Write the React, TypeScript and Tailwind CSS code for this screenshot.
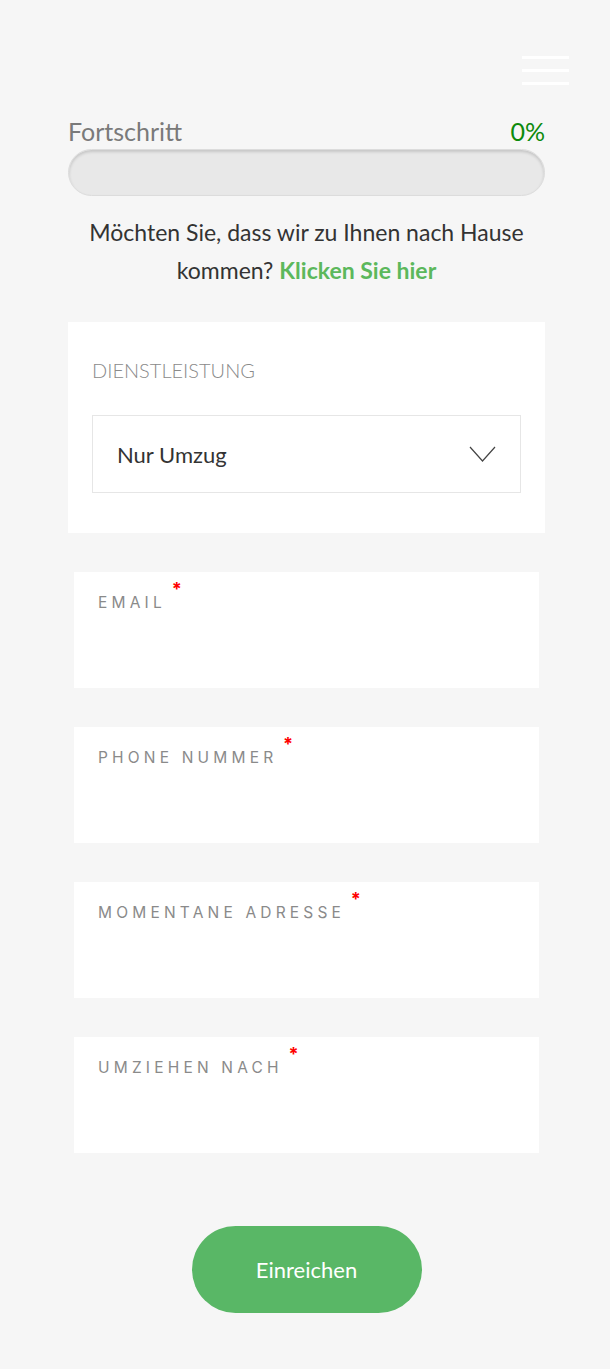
import React from "react";

const fields = ["Email", "Phone Nummer", "Momentane Adresse", "Umziehen nach"];

function Field({ label }: { label: string }) {
  return (
    <div className="mx-[6px] h-[116px] bg-white px-6 pt-[18px]">
      <label className="relative inline-block font-['Inter',sans-serif] text-[15.5px] uppercase tracking-[0.27em] text-[#8a8a8a]">
        {label}
        <span className="absolute -top-[16px] -right-[20px] text-[18px] font-bold text-[#ff0000]">*</span>
      </label>
    </div>
  );
}

export default function App() {
  return (
    <div className="min-h-[1369px] bg-[#f6f6f6] font-['Lato',sans-serif]">
      <div className="flex justify-end pt-[56px] pr-[41px]">
        <div className="flex w-[47px] flex-col gap-[10px]">
          <span className="h-[3px] bg-white" />
          <span className="h-[3px] bg-white" />
          <span className="h-[3px] bg-white" />
        </div>
      </div>

      <div className="ml-[68px] mr-[65px] mt-[31px]">
        <div className="flex items-end justify-between text-[25px] leading-[31px]">
          <span className="text-[#7a7a7a]">Fortschritt</span>
          <span className="text-[#0c8a0c]">0%</span>
        </div>
        <div className="mt-[2px] h-[47px] rounded-full border border-[#dcdcdc] bg-[#e8e8e8] shadow-[inset_0_2px_3px_rgba(0,0,0,0.15)]" />

        <p className="mt-[17px] text-center font-['Lato',sans-serif] text-[23px] leading-[38px] text-[#333]">
          Möchten Sie, dass wir zu Ihnen nach Hause kommen?{" "}
          <a className="font-bold text-[#5cb85c]">Klicken Sie hier</a>
        </p>

        <div className="mt-[33px] bg-white px-6 pt-[35px] pb-[40px]">
          <div className="text-[20px] font-light uppercase leading-[26px] text-[#8a8a8a]">Dienstleistung</div>
          <div className="mt-[32px] flex h-[78px] items-center justify-between border border-[#e6e6e6] pl-[24px] pr-[24px]">
            <span className="text-[22px] text-[#333]">Nur Umzug</span>
            <svg width="27" height="16" viewBox="0 0 27 16" fill="none" stroke="#444" strokeWidth="1.2">
              <path d="M1 1l12.5 14L26 1" />
            </svg>
          </div>
        </div>

        <div className="mt-[39px] flex flex-col gap-[39px]">
          {fields.map((f) => (
            <Field key={f} label={f} />
          ))}
        </div>

        <div className="mt-[73px] flex justify-center">
          <button className="h-[87px] w-[230px] rounded-full bg-[#59b766] text-[22px] text-white">
            Einreichen
          </button>
        </div>
      </div>
    </div>
  );
}
